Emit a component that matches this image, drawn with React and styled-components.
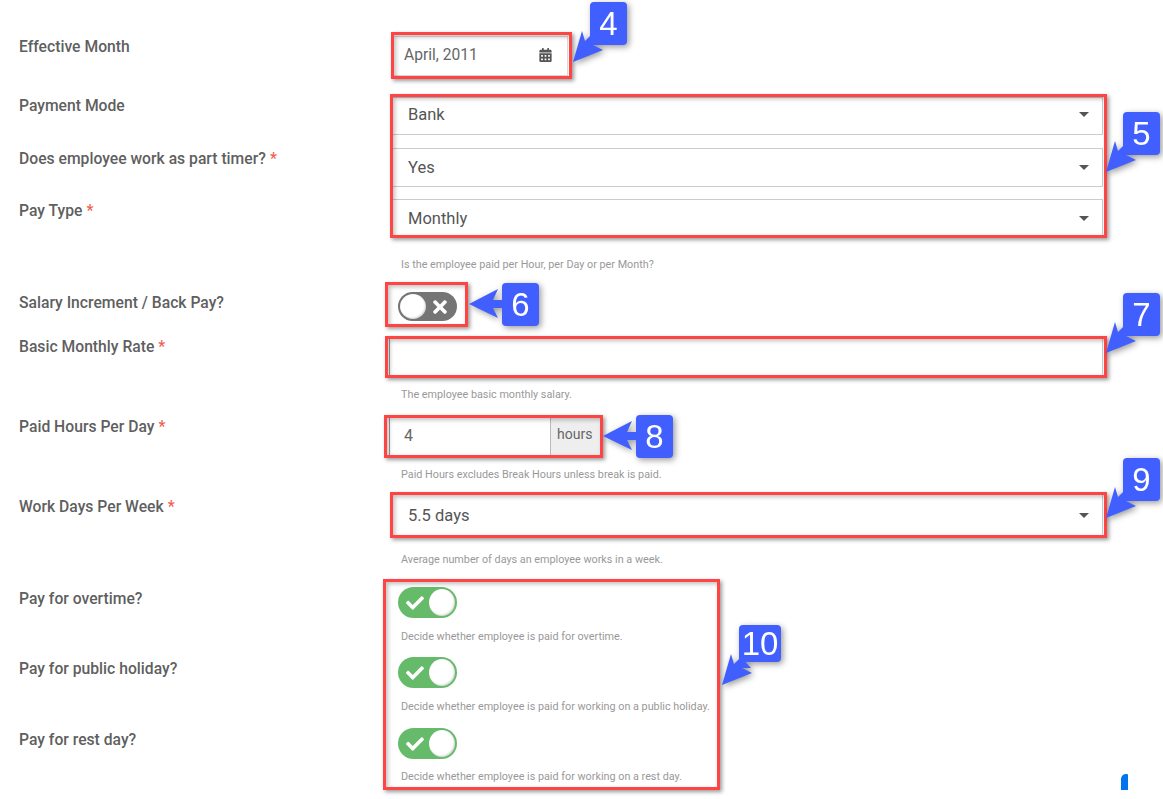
import React from 'react';
import styled, { createGlobalStyle } from 'styled-components';
import { FaCalendarAlt, FaCheck, FaTimes } from 'react-icons/fa';

const Global = createGlobalStyle`
  html, body { margin: 0; padding: 0; background: #fff; }
  body { font-family: Roboto, "Liberation Sans", sans-serif; color: #555; }
`;

const Page = styled.div`
  position: relative;
  width: 1163px;
  height: 799px;
  overflow: hidden;
  padding: 36px 0 0 19px;
  box-sizing: border-box;
`;

const Row = styled.div`
  display: grid;
  grid-template-columns: 370px 714px;
  min-height: ${p => p.$h}px;
  align-items: start;
`;

const Label = styled.label`
  display: block;
  font-size: 15.7px;
  font-weight: 500;
  line-height: 18px;
  color: #5f5f5f;
  margin-top: ${p => p.$offset || 0}px;
`;

const Required = styled.span`
  color: #f0604f;
  margin-left: 4px;
`;

const Control = styled.div`
  display: flex;
  flex-direction: column;
  align-items: flex-start;
`;

const Help = styled.p`
  margin: ${p => p.$top}px 0 0 12px;
  font-size: 10.8px;
  line-height: 14px;
  color: #999;
`;

const DateField = styled.div`
  display: flex;
  align-items: center;
  justify-content: space-between;
  box-sizing: border-box;
  width: 176px;
  height: 40px;
  margin-left: 3px;
  padding: 0 15px 2px 11px;
  border: 1px solid #ddd;
  font-size: 15.6px;
  color: #666;
  svg { width: 13px; height: 14px; color: #555; }
`;

const Select = styled.div`
  display: flex;
  align-items: center;
  justify-content: space-between;
  box-sizing: border-box;
  width: 711px;
  height: ${p => p.$h}px;
  margin-left: 3px;
  padding: 0 13px ${p => p.$lift || 0}px 15px;
  border: 1px solid #ccc;
  border-left-color: #999;
  font-size: 16.5px;
  color: #555;
`;

const Caret = styled.span`
  width: 0;
  height: 0;
  border-left: 5px solid transparent;
  border-right: 5px solid transparent;
  border-top: 5px solid #555;
`;

const TextInput = styled.input`
  display: block;
  box-sizing: border-box;
  width: 714px;
  height: 40px;
  border: 1px solid #ccc;
  border-left-color: #999;
  outline: none;
  background: #fff;
`;

const InputGroup = styled.div`
  display: flex;
  box-sizing: border-box;
  width: 212px;
  height: 40px;
  border: 1px solid #ccc;
  border-left-color: #999;
`;

const GroupValue = styled.div`
  flex: 1;
  padding: 10px 0 0 14px;
  font-size: 16px;
  line-height: 18px;
  color: #666;
`;

const Addon = styled.div`
  width: 50px;
  padding: 8px 0 0 6px;
  box-sizing: border-box;
  border-left: 1px solid #bbb;
  background: #eee;
  font-size: 14px;
  line-height: 18px;
  color: #666;
`;

const Toggle = styled.div`
  display: flex;
  align-items: center;
  justify-content: space-between;
  flex-direction: ${p => (p.$on ? 'row' : 'row-reverse')};
  box-sizing: border-box;
  width: 59px;
  height: ${p => (p.$on ? 31 : 29)}px;
  margin-left: 9px;
  padding: ${p => (p.$on ? '0 2px 0 8px' : '0 7px 0 2px')};
  border-radius: 16px;
  background: ${p => (p.$on ? '#66bb6a' : '#757575')};
  svg { color: #fff; width: ${p => (p.$on ? 18 : 20)}px; height: ${p => (p.$on ? 18 : 20)}px; }
`;

const Knob = styled.span`
  width: 26px;
  height: ${p => (p.$on ? 27 : 25)}px;
  border-radius: 50%;
  background: #fff;
  box-shadow: inset -1px -1px 2px rgba(0, 0, 0, 0.18);
`;

const RedBox = styled.div`
  position: absolute;
  left: ${p => p.$x}px;
  top: ${p => p.$y}px;
  width: ${p => p.$w}px;
  height: ${p => p.$h}px;
  box-sizing: border-box;
  border: 3px solid #ff4444;
  box-shadow: 2px 2px 4px rgba(0, 0, 0, 0.4), inset 2px 2px 4px rgba(0, 0, 0, 0.25);
  pointer-events: none;
`;

const Callout = styled.div`
  position: absolute;
  left: ${p => p.$x}px;
  top: ${p => p.$y}px;
  filter: drop-shadow(2px 2px 3px rgba(0, 0, 0, 0.4));
`;

const Badge = styled.div`
  position: relative;
  display: flex;
  align-items: center;
  justify-content: center;
  width: ${p => p.$w || 37}px;
  height: ${p => p.$h || 43}px;
  border-radius: 4px;
  background: #415fff;
  color: #fff;
  font-family: "Liberation Sans", Arial, sans-serif;
  font-size: 33px;
  line-height: 1;
`;

const Arrow = styled.svg`
  position: absolute;
  left: 0;
  top: 0;
  overflow: visible;
`;

const ChatTab = styled.div`
  position: absolute;
  left: 1121px;
  top: 774px;
  width: 7px;
  height: 16px;
  background: #0075ee;
  border-top-left-radius: 5px;
  border-top-right-radius: 1px;
`;

const DOWN = '-8,29 -5,39 2,32 12,43 3,43 13,48 -17,60';
const LEFT = '-33,21 -4,6 -9,17 2,17 2,25 -9,25 -4,35';

const Note = ({ x, y, w, h, points, n }) => (
  <Callout $x={x} $y={y}>
    <Arrow width="1" height="1">
      <polygon points={points} fill="#415fff" />
    </Arrow>
    <Badge $w={w} $h={h}>{n}</Badge>
  </Callout>
);

const Field = ({ label, required, offset, h, children }) => (
  <Row $h={h}>
    <Label $offset={offset}>
      {label}
      {required && <Required>*</Required>}
    </Label>
    <Control>{children}</Control>
  </Row>
);

const SelectField = ({ value, h, lift }) => (
  <Select $h={h} $lift={lift}>
    {value}
    <Caret />
  </Select>
);

const Switch = ({ on }) => (
  <Toggle $on={on}>
    {on ? <FaCheck /> : <FaTimes />}
    <Knob $on={on} />
  </Toggle>
);

export default function App() {
  return (
    <Page>
      <Global />
      <Field label="Effective Month" offset={2} h={61}>
        <DateField>
          April, 2011
          <FaCalendarAlt />
        </DateField>
      </Field>
      <Field label="Payment Mode" h={51}>
        <SelectField value="Bank" h={38} lift={4} />
      </Field>
      <Field label="Does employee work as part timer?" required offset={2} h={51}>
        <SelectField value="Yes" h={39} lift={1} />
      </Field>
      <Field label="Pay Type" required offset={3} h={93}>
        <SelectField value="Monthly" h={39} />
        <Help $top={20}>Is the employee paid per Hour, per Day or per Month?</Help>
      </Field>
      <Field label="Salary Increment / Back Pay?" offset={2} h={45}>
        <Switch on={false} />
      </Field>
      <Field label="Basic Monthly Rate" required offset={1} h={79}>
        <TextInput aria-label="Basic Monthly Rate" />
        <Help $top={11}>The employee basic monthly salary.</Help>
      </Field>
      <Field label="Paid Hours Per Day" required offset={2} h={77}>
        <InputGroup>
          <GroupValue>4</GroupValue>
          <Addon>hours</Addon>
        </InputGroup>
        <Help $top={12}>Paid Hours excludes Break Hours unless break is paid.</Help>
      </Field>
      <Field label="Work Days Per Week" required offset={5} h={94}>
        <SelectField value="5.5 days" h={44} />
        <Help $top={16}>Average number of days an employee works in a week.</Help>
      </Field>
      <Field label="Pay for overtime?" offset={3} h={70}>
        <Switch on />
        <Help $top={12}>Decide whether employee is paid for overtime.</Help>
      </Field>
      <Field label="Pay for public holiday?" offset={3} h={71}>
        <Switch on />
        <Help $top={12}>Decide whether employee is paid for working on a public holiday.</Help>
      </Field>
      <Field label="Pay for rest day?" offset={3} h={70}>
        <Switch on />
        <Help $top={11}>Decide whether employee is paid for working on a rest day.</Help>
      </Field>

      <RedBox $x={391} $y={32} $w={181} $h={47} />
      <RedBox $x={390} $y={94} $w={717} $h={144} />
      <RedBox $x={385} $y={282} $w={83} $h={45} />
      <RedBox $x={385} $y={336} $w={722} $h={42} />
      <RedBox $x={384} $y={415} $w={219} $h={43} />
      <RedBox $x={390} $y={492} $w={717} $h={46} />
      <RedBox $x={383} $y={579} $w={337} $h={211} />

      <Note x={590} y={2} n="4" points={DOWN} />
      <Note x={1123} y={112} n="5" points={DOWN} />
      <Note x={502} y={283} n="6" points={LEFT} />
      <Note x={1123} y={293} n="7" points={DOWN} />
      <Note x={636} y={415} n="8" points={LEFT} />
      <Note x={1123} y={458} n="9" points={DOWN} />
      <Note x={739} y={625} w={42} h={37} n="10" points={DOWN} />

      <ChatTab />
    </Page>
  );
}
